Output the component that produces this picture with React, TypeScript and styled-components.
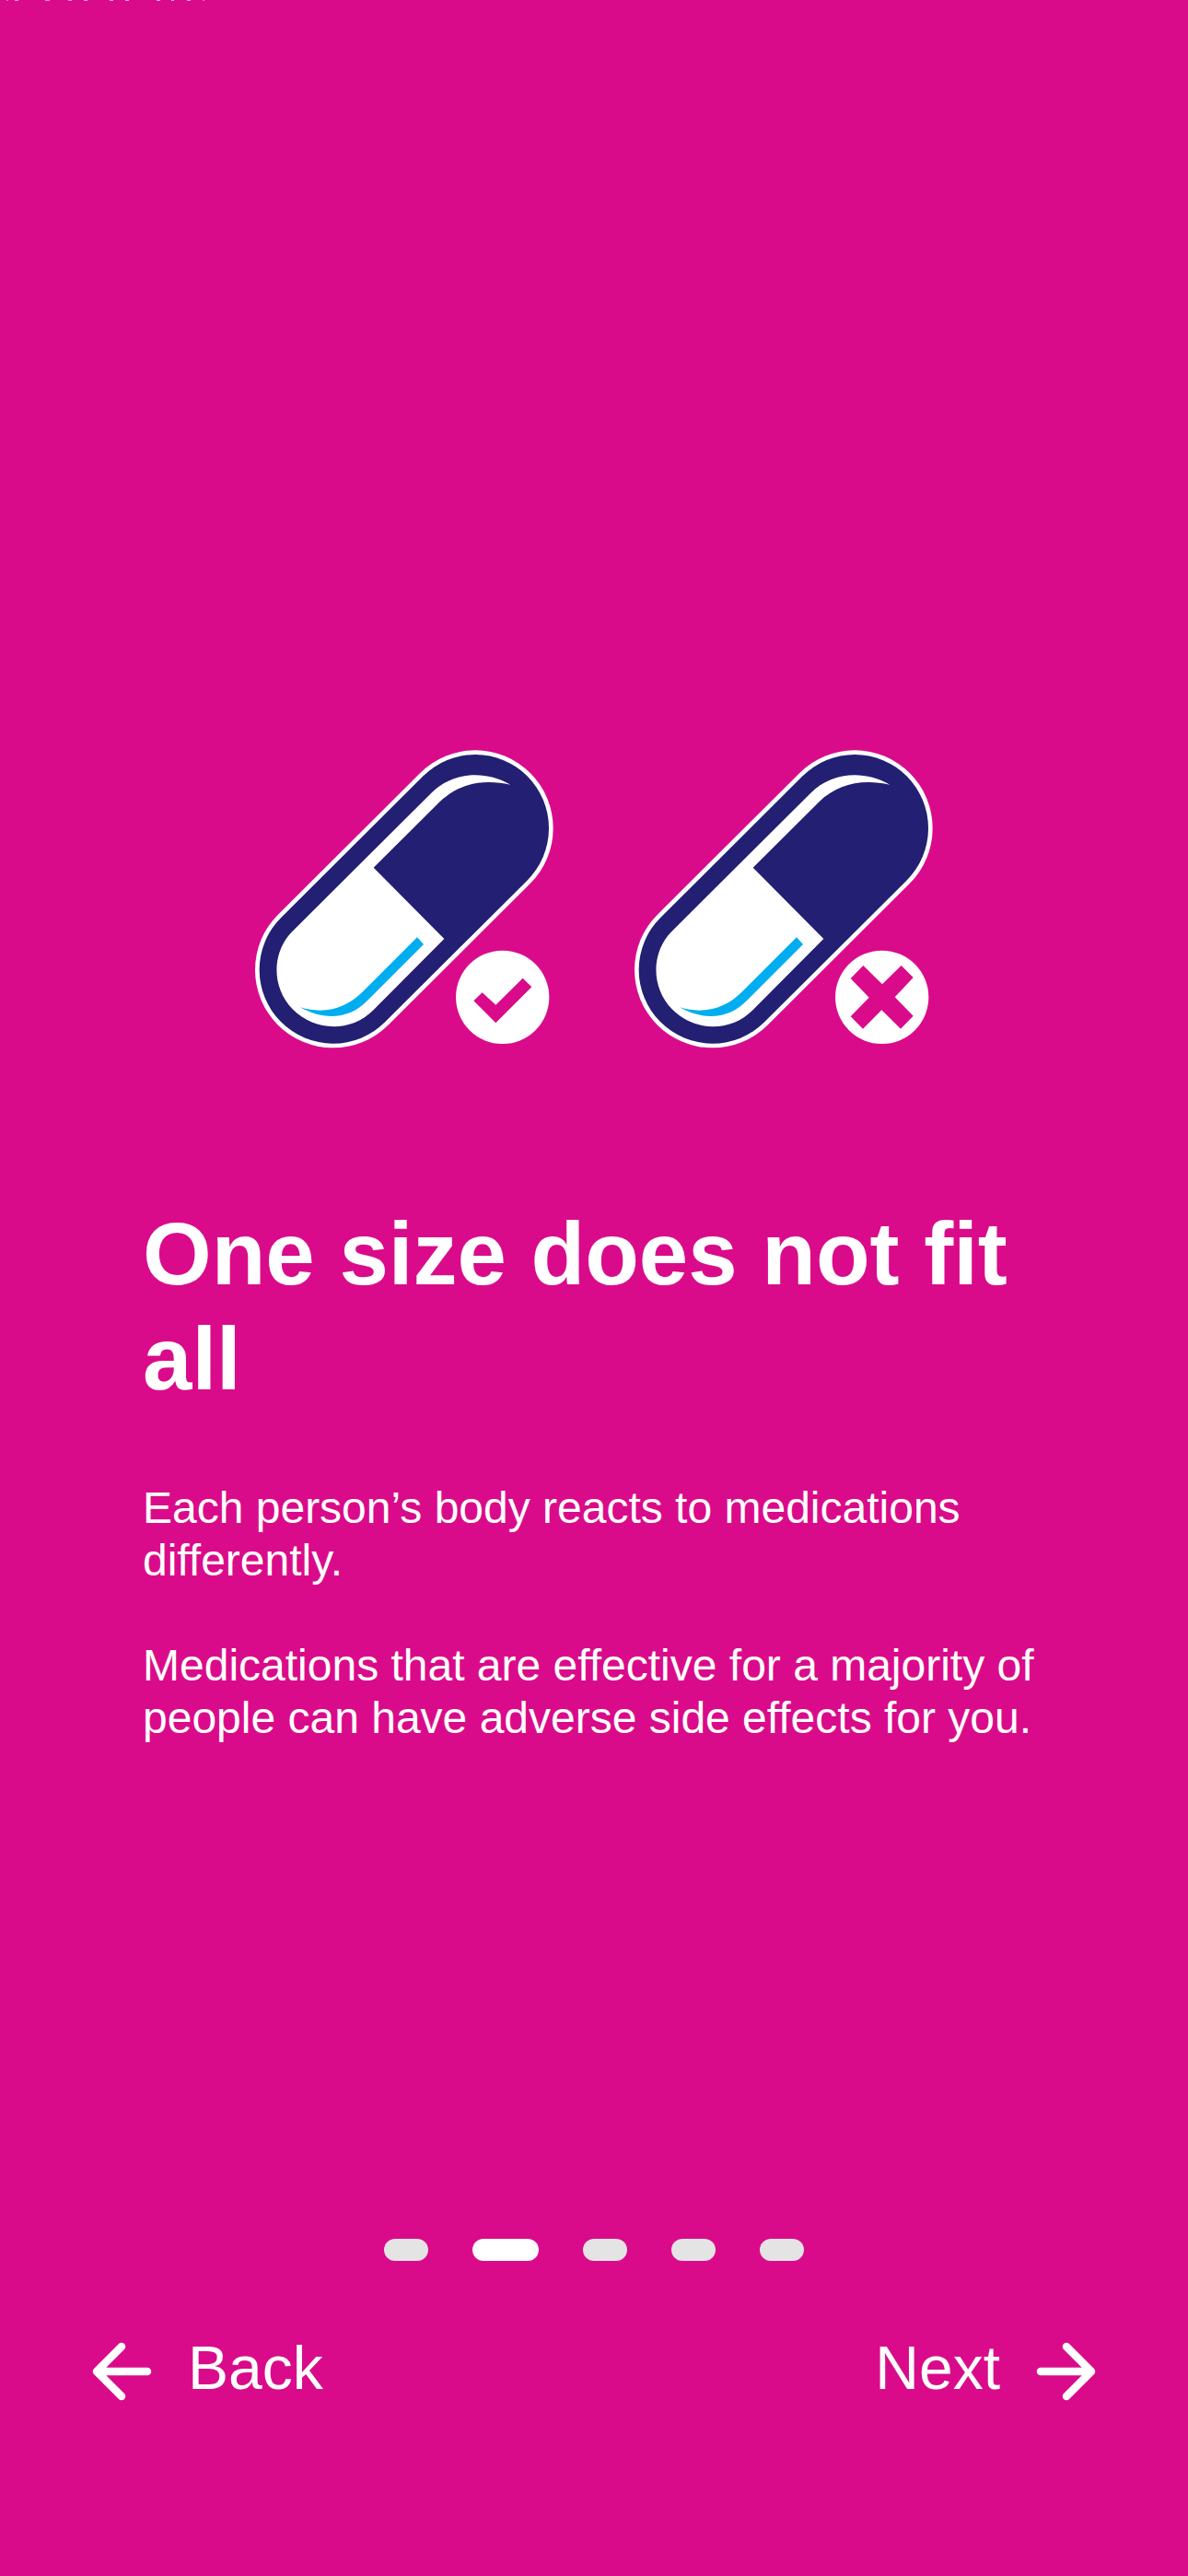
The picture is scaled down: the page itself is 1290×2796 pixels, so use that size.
import React from "react";
import styled, { createGlobalStyle } from "styled-components";

const PINK = "#da0b8a";
const NAVY = "#231f72";

const GlobalStyle = createGlobalStyle`
  * { box-sizing: border-box; }
  body { margin: 0; background: ${PINK}; }
`;

const Screen = styled.main`
  position: relative;
  display: flex;
  flex-direction: column;
  min-height: 100vh;
  color: #fff;
  background: ${PINK};
  font-family: Helvetica, "Liberation Sans", Arial, sans-serif;
`;

const TopEdge = styled.svg`
  position: absolute;
  top: 0;
  left: 0;
  width: 230px;
  height: 1px;
  fill: #fff;
`;

const Slide = styled.section`
  flex: 1;
  display: flex;
  flex-direction: column;
  padding: 814px 155px 0;
`;

const Illustration = styled.div`
  display: flex;
  justify-content: center;
  gap: 88px;
  margin-bottom: 166px;
`;

const PillDrawing = styled.svg`
  display: block;
  width: 324px;
  height: 324px;
`;

const Title = styled.h1`
  margin: 0 0 76px;
  font-size: 96px;
  line-height: 114px;
  font-weight: 700;
`;

const Copy = styled.p`
  margin: 0 0 57px;
  font-size: 48px;
  line-height: 57px;
`;

const Pager = styled.nav`
  display: flex;
  justify-content: center;
  gap: 48px;
  padding-bottom: 79px;
`;

const Dot = styled.button<{ $active?: boolean }>`
  width: ${(p) => (p.$active ? 72 : 48)}px;
  height: 24px;
  padding: 0;
  border: 0;
  border-radius: 12px;
  background: ${(p) => (p.$active ? "#fff" : "#e4e4e4")};
`;

const Footer = styled.footer`
  display: flex;
  justify-content: space-between;
  padding: 0 96px 189px;
`;

const NavButton = styled.button`
  display: flex;
  align-items: center;
  gap: 36px;
  padding: 0;
  border: 0;
  background: none;
  color: inherit;
  font-family: inherit;
  font-size: 66px;
  line-height: 74px;
`;

const Arrow = styled.svg`
  display: block;
  width: 72px;
  height: 72px;
  fill: none;
  stroke: currentColor;
  stroke-width: 8.5;
  stroke-linecap: round;
  stroke-linejoin: round;
`;

function Pill({ label, children }: { label: string; children: React.ReactNode }) {
  return (
    <PillDrawing viewBox="0 0 972 972" role="img" aria-label={label}>
      <g strokeLinecap="round">
        <path d="M254 716L717 255" stroke="#fff" strokeWidth="508" />
        <path d="M254 716L717 255" stroke={NAVY} strokeWidth="480" />
      </g>
      <path
        d="M832 113C740 61 638 77 574 140L122 590C53 659 53 773 122 844C196 919 312 919 384 848L616 615L386 383L600 170C664 109 740 94 832 113Z"
        fill="#fff"
      />
      <path
        d="M147 838C220 860 291 846 348 790L528 610L549 633L369 813C307 880 220 880 147 838Z"
        fill="#00aeef"
      />
      <circle cx="806" cy="805" r="152" fill="#fff" />
      {children}
    </PillDrawing>
  );
}

const dots = [1, 2, 3, 4, 5];

// Start, width and opacity of each mark along the top edge.
const edgeMarks = [
  [7, 2, 0.4],
  [16, 4, 0.6],
  [49, 5, 0.55],
  [74, 4, 0.55],
  [91, 4, 0.6],
  [119, 4, 0.6],
  [136, 4, 0.65],
  [170, 4, 0.65],
  [186, 3, 0.65],
  [203, 4, 0.6],
  [220, 2, 0.4],
];

export default function App() {
  return (
    <>
      <GlobalStyle />
      <Screen>
        <TopEdge viewBox="0 0 230 1" aria-hidden="true">
          {edgeMarks.map(([x, width, opacity]) => (
            <rect key={x} x={x} y="0" width={width} height="1" opacity={opacity} />
          ))}
        </TopEdge>
        <Slide>
          <Illustration>
            <Pill label="Medication that works">
              <path d="M712 817L740 790L784 830L872 743L901 772L784 889Z" fill={PINK} />
            </Pill>
            <Pill label="Medication that does not work">
              <path
                d="M745 702L807 763L869 702L908 741L848 805L908 866L867 908L805 847L744 908L704 868L764 806L704 744Z"
                fill={PINK}
              />
            </Pill>
          </Illustration>
          <Title>One size does not fit all</Title>
          <Copy>Each person’s body reacts to medications differently.</Copy>
          <Copy>Medications that are effective for a majority of people can have adverse side effects for you.</Copy>
        </Slide>
        <Pager aria-label="Introduction pages">
          {dots.map((n) => (
            <Dot key={n} type="button" $active={n === 2} aria-label={`Page ${n}`} />
          ))}
        </Pager>
        <Footer>
          <NavButton type="button">
            <Arrow viewBox="0 0 72 72" aria-hidden="true">
              <path d="M64 40H10M36 13L9 40L36 67" />
            </Arrow>
            Back
          </NavButton>
          <NavButton type="button">
            Next
            <Arrow viewBox="0 0 72 72" aria-hidden="true">
              <path d="M8 40H62M36 13L63 40L36 67" />
            </Arrow>
          </NavButton>
        </Footer>
      </Screen>
    </>
  );
}
